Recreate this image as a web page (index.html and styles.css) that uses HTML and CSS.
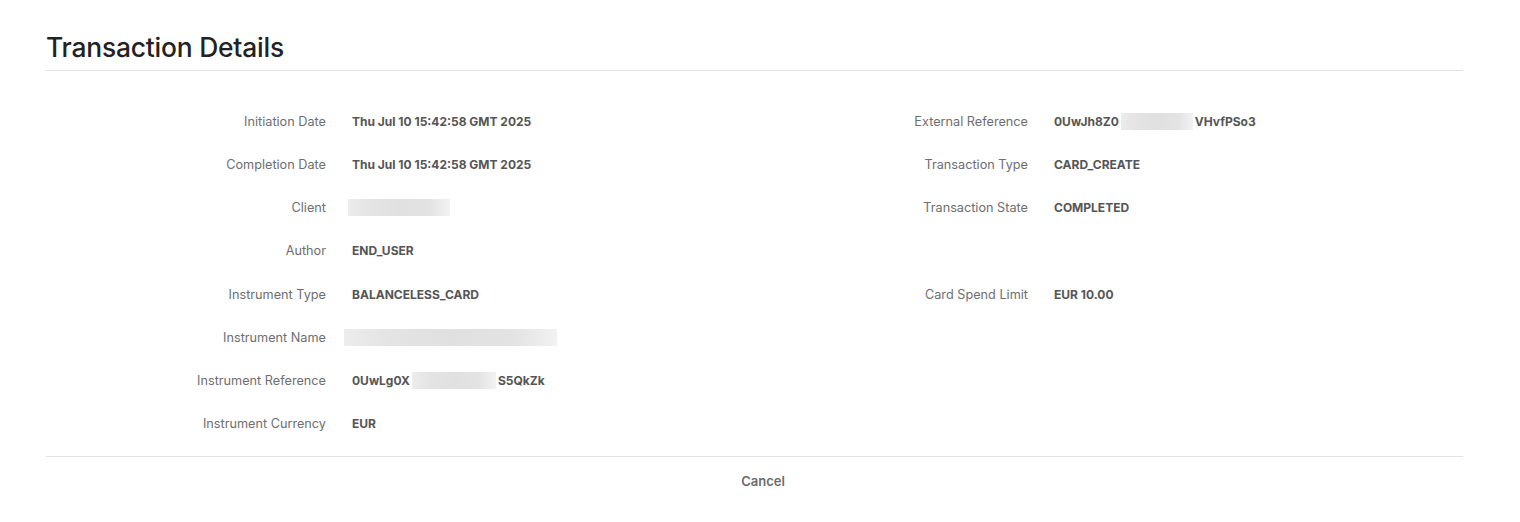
FILE: index.html
```html
<!DOCTYPE html>
<html>
<head>
<meta charset="utf-8">
<link rel="stylesheet" href="styles.css">
</head>
<body>
<div class="dialog">
  <h1 class="title">Transaction Details</h1>
  <div class="body">
    <div class="col col-left">
      <div class="row"><span class="label">Initiation Date</span><span class="value">Thu Jul 10 15:42:58 GMT 2025</span></div>
      <div class="row"><span class="label">Completion Date</span><span class="value">Thu Jul 10 15:42:58 GMT 2025</span></div>
      <div class="row"><span class="label">Client</span><span class="value"><span class="redact redact-client"></span></span></div>
      <div class="row"><span class="label">Author</span><span class="value">END_USER</span></div>
      <div class="row"><span class="label">Instrument Type</span><span class="value">BALANCELESS_CARD</span></div>
      <div class="row"><span class="label">Instrument Name</span><span class="value"><span class="redact redact-name"></span></span></div>
      <div class="row"><span class="label">Instrument Reference</span><span class="value">0UwLg0X<span class="redact redact-iref"></span>S5QkZk</span></div>
      <div class="row"><span class="label">Instrument Currency</span><span class="value">EUR</span></div>
    </div>
    <div class="col col-right">
      <div class="row"><span class="label">External Reference</span><span class="value">0UwJh8Z0<span class="redact redact-eref"></span>VHvfPSo3</span></div>
      <div class="row"><span class="label">Transaction Type</span><span class="value">CARD_CREATE</span></div>
      <div class="row"><span class="label">Transaction State</span><span class="value">COMPLETED</span></div>
      <div class="row"></div>
      <div class="row"><span class="label">Card Spend Limit</span><span class="value">EUR 10.00</span></div>
    </div>
  </div>
  <div class="footer">
    <button class="btn-cancel">Cancel</button>
  </div>
</div>
</body>
</html>
```
FILE: styles.css
```css
* { box-sizing: border-box; }
html, body { margin: 0; padding: 0; background: #fff; }
body { font-family: Inter, "Noto Sans", sans-serif; color: #555; }
.dialog {
  padding: 29px 57px 0 46px;
}
.title {
  margin: 0;
  font-size: 26.4px;
  font-weight: 500;
  color: #222;
  line-height: 36px;
  padding-bottom: 5px;
  border-bottom: 1px solid #e2e2e2;
  letter-spacing: -0.2px;
}
.body {
  display: grid;
  grid-template-columns: 702px 1fr;
  padding-top: 29px;
  padding-bottom: 11px;
}
.row {
  display: grid;
  grid-template-columns: 280px 1fr;
  column-gap: 26px;
  align-items: center;
  height: 43.15px;
}
.label {
  text-align: right;
  font-size: 12.7px;
  color: #6e6e6e;
}
.value {
  font-size: 12px;
  font-weight: 700;
  color: #555;
  display: flex;
  align-items: center;
  white-space: nowrap;
}
.redact {
  display: inline-block;
  height: 17px;
  background: linear-gradient(90deg, #ececec 0%, #e4e4e4 20%, #e0e0e0 50%, #e3e3e3 80%, #f2f2f2 100%);
}
.redact-client { width: 102px; margin-left: -4px; }
.redact-name { width: 213px; margin-left: -8px; }
.redact-iref { width: 84px; margin-left: 2px; margin-right: 2px; }
.redact-eref { width: 72px; margin-left: 2px; margin-right: 2px; }
.footer {
  border-top: 1px solid #e2e2e2;
  display: flex;
  justify-content: center;
  padding-top: 14px;
}
.btn-cancel {
  border: none;
  background: none;
  font-family: Inter, "Noto Sans", sans-serif;
  font-size: 13px;
  font-weight: 600;
  color: #6b6b6b;
  padding: 2px 8px;
  margin-left: 17px;
  cursor: pointer;
}
```
